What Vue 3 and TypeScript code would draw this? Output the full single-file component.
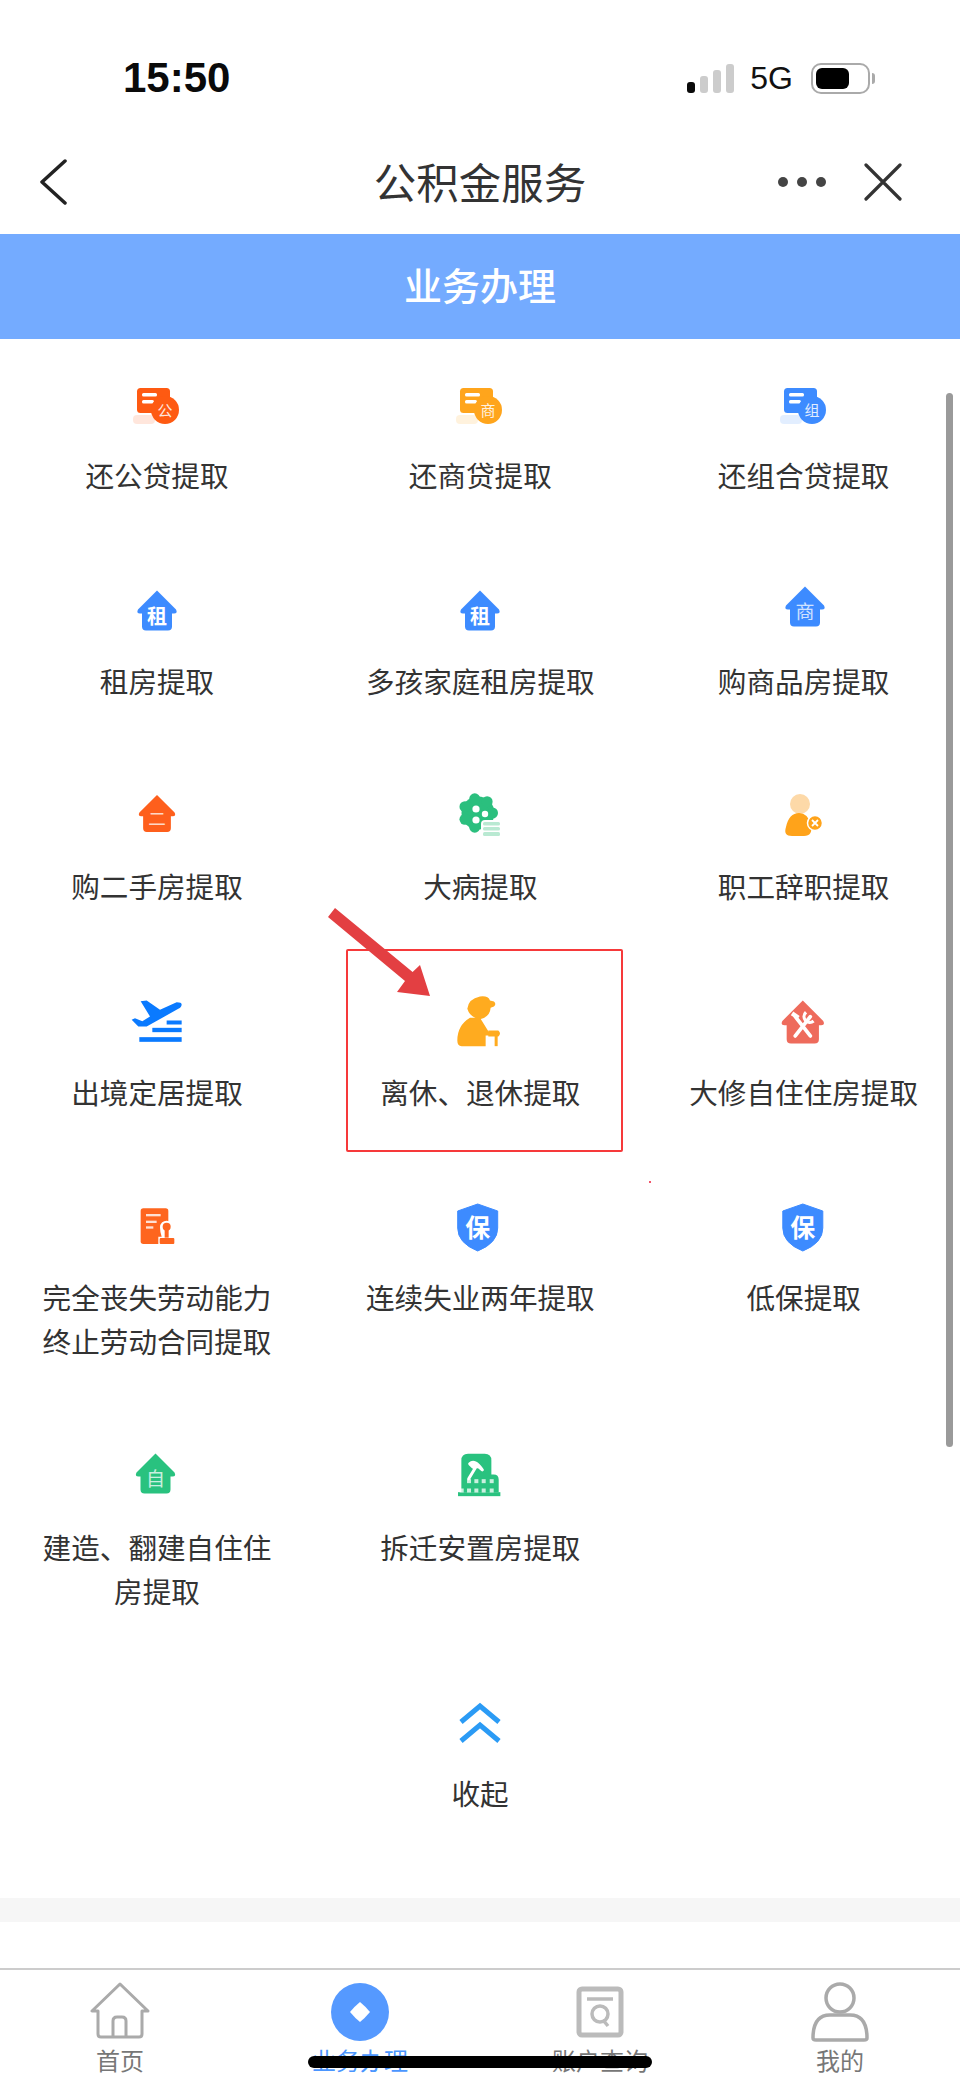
<script setup lang="ts">
interface Item {
  label: string
  icon: string
  color: string
  glyph?: string
  box?: string
}

const HOUSE = 'M30 10 L49 29 Q51 33 47 33 H45 V46 Q45 50 41 50 H19 Q15 50 15 46 V33 H13 Q9 33 11 29 Z'

const items: Item[] = [
  { label: '还公贷提取', icon: 'loan', color: '#fe5a12', glyph: '公' },
  { label: '还商贷提取', icon: 'loan', color: '#ffa51c', glyph: '商' },
  { label: '还组合贷提取', icon: 'loan', color: '#3d8bff', glyph: '组' },
  { label: '租房提取', icon: 'house', color: '#3d8bff', glyph: '租', box: 'translate(0 -1.5)' },
  { label: '多孩家庭租房提取', icon: 'house', color: '#3d8bff', glyph: '租', box: 'translate(0 -1.5)' },
  { label: '购商品房提取', icon: 'house-thin', color: '#3d8bff', glyph: '商', box: 'translate(1 -5.5)' },
  { label: '购二手房提取', icon: 'house-thin', color: '#fe5f1c', glyph: '二', box: 'translate(30 26.5) scale(.925) translate(-30 -30)' },
  { label: '大病提取', icon: 'gear', color: '#2bbf7e' },
  { label: '职工辞职提取', icon: 'person', color: '#ffa31a' },
  { label: '出境定居提取', icon: 'plane', color: '#0a7aff' },
  { label: '离休、退休提取', icon: 'elder', color: '#ffab1f' },
  { label: '大修自住住房提取', icon: 'tools', color: '#ee6b5c' },
  { label: '完全丧失劳动能力终止劳动合同提取', icon: 'doc', color: '#fe651e' },
  { label: '连续失业两年提取', icon: 'shield', color: '#3d8bff', box: 'translate(-2.3 0)' },
  { label: '低保提取', icon: 'shield', color: '#3d8bff', box: 'translate(-1.2 0)' },
  { label: '建造、翻建自住住房提取', icon: 'house-thin', color: '#29c27f', glyph: '自', box: 'translate(-1.5 -4.5)' },
  { label: '拆迁安置房提取', icon: 'building', color: '#29c27f' },
]

const tabs = ['首页', '业务办理', '账户查询', '我的']
const bumps = [0, 51, 103, 154, 206, 257, 309].map((deg) => ({
  x: 28 + 14.5 * Math.cos((deg * Math.PI) / 180),
  y: 30 + 14.5 * Math.sin((deg * Math.PI) / 180),
}))
const windows = [
  [148, 115], [170, 115], [192, 115], [216, 115],
  [126, 143], [148, 143], [170, 143], [192, 143], [216, 143],
]
</script>

<template>
  <div class="page">
    <div class="status">
      <span class="time">15:50</span>
      <div class="status-right">
        <div class="signal">
          <i class="bar on b1"></i>
          <i class="bar b2"></i>
          <i class="bar b3"></i>
          <i class="bar b4"></i>
        </div>
        <span class="net">5G</span>
        <div class="battery"><i class="level"></i></div>
        <i class="nub"></i>
      </div>
    </div>

    <header class="nav">
      <svg class="back" width="28" height="46" viewBox="0 0 28 46">
        <path d="M26 2 L3 23 L26 44" fill="none" stroke="#222" stroke-width="3.5" stroke-linecap="round" stroke-linejoin="round" />
      </svg>
      <h1 class="title">公积金服务</h1>
      <div class="nav-right">
        <div class="dots"><i></i><i></i><i></i></div>
        <svg width="38" height="38" viewBox="0 0 38 38">
          <path d="M2 2 L36 36 M36 2 L2 36" fill="none" stroke="#333" stroke-width="3.2" stroke-linecap="round" />
        </svg>
      </div>
    </header>

    <div class="band">业务办理</div>

    <section class="grid">
      <div v-for="item in items" :key="item.label" class="item">
        <svg class="icon" width="60" height="60" viewBox="0 0 60 60">
          <g v-if="item.icon === 'loan'" :fill="item.color">
            <rect x="6" y="39" width="22" height="9" rx="4" opacity=".15" />
            <rect x="10" y="12" width="33" height="25" rx="3.5" />
            <rect x="15" y="17" width="15" height="3.5" rx="1.5" fill="#fff" />
            <rect x="15" y="24" width="12" height="3.5" rx="1.5" fill="#fff" />
            <circle cx="38" cy="34" r="14" />
            <text x="38" y="39.5" class="glyph" font-size="15" fill="#fff" opacity=".85">{{ item.glyph }}</text>
          </g>

          <g v-else-if="item.icon === 'house'" :transform="item.box" :fill="item.color">
            <path :d="HOUSE" />
            <text x="30" y="43" class="glyph strong" font-size="20" fill="#fff">{{ item.glyph }}</text>
          </g>

          <g v-else-if="item.icon === 'house-thin'" :transform="item.box" :fill="item.color">
            <path :d="HOUSE" />
            <text x="30" y="42.5" class="glyph" font-size="19" fill="#fff" opacity=".75">{{ item.glyph }}</text>
          </g>

          <g v-else-if="item.icon === 'gear'" transform="translate(0 -4)" :fill="item.color">
            <circle cx="28" cy="30" r="16.5" />
            <circle v-for="(b, i) in bumps" :key="i" :cx="b.x" :cy="b.y" r="5.5" />
            <circle cx="26" cy="26" r="3.6" fill="#fff" />
            <circle cx="26" cy="37" r="3.6" fill="#fff" />
            <circle cx="35" cy="31" r="3.2" fill="#fff" />
            <rect x="31" y="37" width="20" height="18" rx="4" fill="#fff" />
            <g fill="#b9e9d2">
              <rect x="33" y="39" width="17" height="3.5" rx="1.5" />
              <rect x="33" y="44" width="17" height="3.5" rx="1.5" />
              <rect x="33" y="49" width="17" height="4" rx="1.5" />
            </g>
          </g>

          <g v-else-if="item.icon === 'person'" transform="translate(0 -4)">
            <circle cx="26" cy="21" r="10" fill="#fdd9a8" />
            <path d="M25 30 Q34 30 37 42 Q39 53 30 53 H18 Q9 53 12 44 Q15 30 25 30 Z" :fill="item.color" />
            <circle cx="41" cy="40" r="7.5" :fill="item.color" stroke="#fff" stroke-width="1.5" />
            <path d="M38 37 L44 43 M44 37 L38 43" stroke="#fff" stroke-width="1.8" />
          </g>

          <g v-else-if="item.icon === 'plane'" transform="translate(-17 -12.5) scale(.3333)" :fill="item.color">
            <path d="M92 62 L110 60 L150 88 L200 65 Q215 65 215 72 Q215 80 205 85 L110 138 H85 L65 118 L75 113 L97 122 L120 108 Z" />
            <rect x="170" y="120" width="45" height="12" />
            <rect x="127" y="142" width="88" height="13" />
            <rect x="88" y="170" width="127" height="14" />
          </g>

          <g v-else-if="item.icon === 'elder'" transform="translate(-130 -92.5) scale(.3333)" :fill="item.color">
            <path d="M442 325 Q445 295 480 288 Q505 285 510 300 L522 303 Q530 310 522 318 L512 322 Q510 350 480 356 Q450 352 442 325 Z" />
            <path d="M450 352 Q412 375 412 420 Q412 437 425 437 H497 V405 H518 V402 L505 392 L480 352 Z" />
            <path d="M505 390 H535 Q545 398 535 408 H505 Z" />
            <rect x="524" y="405" width="9" height="32" />
          </g>

          <g v-else-if="item.icon === 'tools'" transform="translate(28.8 29) scale(1.075) translate(-30 -30)">
            <path :d="HOUSE" :fill="item.color" />
            <path d="M23 43 L37 25 M23 25 L37 43" stroke="#fff" stroke-width="3.4" stroke-linecap="round" fill="none" />
            <path d="M33 21 A5 5 0 0 0 40 29" stroke="#fff" stroke-width="3" fill="none" />
            <path d="M20 22 L26 26" stroke="#fff" stroke-width="4" fill="none" />
          </g>

          <g v-else-if="item.icon === 'doc'" transform="translate(-17 -8) scale(.3333)">
            <rect x="92" y="55" width="83" height="107" rx="8" :fill="item.color" />
            <g fill="#fff" opacity=".8">
              <rect x="108" y="72" width="44" height="7" />
              <rect x="108" y="92" width="32" height="7" />
              <rect x="108" y="109" width="22" height="7" />
            </g>
            <path d="M145 165 V140 H155 Q150 125 150 112 A20 20 0 0 1 190 112 Q190 125 185 140 H198 V165 Z" fill="#fff" />
            <circle cx="170" cy="110" r="12" :fill="item.color" />
            <rect x="164" y="115" width="12" height="28" :fill="item.color" />
            <rect x="149" y="144" width="44" height="18" rx="3" :fill="item.color" />
          </g>

          <g v-else-if="item.icon === 'shield'" :transform="item.box">
            <path d="M30 6 L50 13 V30 Q50 45 30 53 Q10 45 10 30 V13 Z" :fill="item.color" stroke="#3d8bff" stroke-linejoin="round" stroke-width="1" />
            <text x="30" y="39" class="glyph strong" font-size="25" fill="#fff">保</text>
          </g>

          <g v-else-if="item.icon === 'building'" transform="translate(-30.3 -7.5) scale(.3333)" :fill="item.color">
            <path d="M125 60 Q125 40 145 40 H195 Q215 40 215 60 V102 H222 Q237 102 237 118 V155 H125 Z" />
            <rect x="115" y="155" width="127" height="12" />
            <path d="M147 115 L168 80 M150 70 Q165 55 188 88 Q172 72 160 80 Z" stroke="#fff" stroke-width="9" fill="#fff" stroke-linecap="round" stroke-linejoin="round" />
            <rect v-for="(w, i) in windows" :key="i" :x="w[0] - 6" :y="w[1] + 1" width="12" height="12" fill="#fff" opacity=".75" />
          </g>
        </svg>
        <p class="label">{{ item.label }}</p>
      </div>
    </section>

    <div class="collapse">
      <svg class="icon" width="60" height="60" viewBox="0 0 60 60">
        <path d="M11 28 L30 12 L49 28 M11 47 L30 31 L49 47" fill="none" stroke="#2b9bf5" stroke-width="5" />
      </svg>
      <p class="label">收起</p>
    </div>

    <div class="strip"></div>

    <nav class="tabs">
      <div v-for="(tab, i) in tabs" :key="tab" class="tab" :class="{ active: i === 1 }">
        <svg width="60" height="60" viewBox="0 0 60 60">
          <g v-if="i === 0" fill="none" stroke="#aaa" stroke-width="3" stroke-linejoin="round">
            <path d="M30 2 L2 29 L8 29 V52 Q8 55 11 55 H49 Q52 55 52 52 V29 L58 29 Z" />
            <path d="M23 55 V39 Q23 35 27 35 H32 Q36 35 36 39 V55" />
          </g>
          <g v-else-if="i === 1">
            <circle cx="30" cy="30" r="29" fill="#5599ff" />
            <path d="M30 20 Q35 24 40 30 Q35 36 30 40 Q25 36 20 30 Q25 24 30 20 Z" fill="#fff" />
          </g>
          <g v-else-if="i === 2" fill="none" stroke="#bbb">
            <rect x="9" y="7" width="42" height="46" rx="3" stroke-width="5" />
            <path d="M17 17 H43" stroke-width="3.5" />
            <circle cx="30" cy="32" r="8" stroke-width="3.5" />
            <path d="M33 38 L38 44" stroke-width="3.5" />
          </g>
          <g v-else fill="none" stroke="#aaa" stroke-width="3.5">
            <ellipse cx="30" cy="16" rx="14" ry="14" />
            <path d="M3 56 Q3 33 20 33 H40 Q57 33 57 56 Q57 58 54 58 H6 Q3 58 3 56 Z" />
          </g>
        </svg>
        <span class="tab-label">{{ tab }}</span>
      </div>
    </nav>

    <!-- annotations and overlays on top of the screenshot -->
    <div class="scrollbar"></div>
    <div class="mark"></div>
    <i class="speck"></i>
    <svg class="arrow" width="110" height="95" viewBox="320 905 110 95">
      <path d="M335 908 L412.6 972 L420 965 L430 996 L397 992 L405 981 L328 917 Z" fill="#e33f42" />
    </svg>
    <div class="home-bar"></div>
  </div>
</template>

<style scoped>
.page {
  position: relative;
  display: flex;
  flex-direction: column;
  width: 960px;
  height: 2087px;
  overflow: hidden;
  background: #fff;
  font-family: "Noto Sans CJK SC", "Liberation Sans", sans-serif;
  color: #333;
}

.status {
  display: flex;
  align-items: center;
  justify-content: space-between;
  box-sizing: border-box;
  height: 130px;
  padding: 26px 85px 0 123px;
}

.time {
  font-family: "Liberation Sans", sans-serif;
  font-size: 42px;
  font-weight: 700;
  color: #0a0a0a;
}

.status-right {
  display: flex;
  align-items: center;
}

.signal {
  display: flex;
  align-items: flex-end;
  gap: 5px;
  height: 29px;
}

.bar {
  display: block;
  width: 8px;
  border-radius: 3px;
  background: #ccc;
}

.bar.on {
  background: #0a0a0a;
}

.b1 { height: 11px; }
.b2 { height: 17px; }
.b3 { height: 23px; }
.b4 { height: 29px; }

.net {
  margin-left: 16px;
  font-family: "Liberation Sans", sans-serif;
  font-size: 32px;
  color: #111;
}

.battery {
  display: flex;
  align-items: center;
  box-sizing: border-box;
  width: 59px;
  height: 31px;
  margin-left: 18px;
  padding: 0 3px;
  border: 2px solid #aaa;
  border-radius: 10px;
}

.level {
  display: block;
  width: 33px;
  height: 21px;
  border-radius: 6px;
  background: #000;
}

.nub {
  display: block;
  width: 3px;
  height: 11px;
  margin-left: 2px;
  border-radius: 0 3px 3px 0;
  background: #aaa;
}

.nav {
  display: grid;
  grid-template-columns: 1fr auto 1fr;
  align-items: center;
  box-sizing: border-box;
  height: 104px;
  padding: 0 58px;
}

.back {
  display: block;
  margin-left: -19px;
}

.title {
  margin: -3px 0 0;
  font-size: 42.5px;
  font-weight: 400;
  line-height: 56px;
  color: #333;
}

.nav-right {
  display: flex;
  align-items: center;
  justify-content: flex-end;
  gap: 38px;
}

.dots {
  display: flex;
  gap: 9px;
}

.dots i {
  display: block;
  width: 10px;
  height: 10px;
  border-radius: 50%;
  background: #444;
}

.band {
  height: 105px;
  background: #74abff;
  color: #fff;
  font-size: 38px;
  font-weight: 500;
  line-height: 100px;
  text-align: center;
}

.grid {
  display: grid;
  grid-template-columns: repeat(3, 314px);
  column-gap: 9.33px;
  row-gap: 84.5px;
  align-items: start;
  padding-top: 37px;
}

.item,
.collapse {
  display: flex;
  flex-direction: column;
  align-items: center;
}

.icon {
  display: block;
  overflow: visible;
}

.label {
  width: 240px;
  margin: 17px 0 0;
  font-size: 28.6px;
  line-height: 44px;
  text-align: center;
  color: #333;
}

.glyph {
  font-family: "Noto Sans CJK SC", sans-serif;
  text-anchor: middle;
}

.glyph.strong {
  font-weight: 700;
}

.collapse {
  margin-top: 81.5px;
}

.strip {
  height: 24px;
  margin-top: 83px;
  background: #f6f6f6;
}

.tabs {
  display: grid;
  grid-template-columns: repeat(4, 240px);
  box-sizing: border-box;
  height: 119px;
  margin-top: 46px;
  padding-top: 12px;
  border-top: 2px solid #ccc;
}

.tab {
  display: flex;
  flex-direction: column;
  align-items: center;
}

.tab svg {
  display: block;
}

.tab-label {
  margin-top: 3px;
  font-size: 24px;
  line-height: 30px;
  color: #777;
}

.tab.active .tab-label {
  color: #4b96ff;
}

.scrollbar {
  position: absolute;
  left: 946px;
  top: 393px;
  width: 7px;
  height: 1054px;
  border-radius: 4px;
  background: #9a9a9a;
}

.mark {
  position: absolute;
  left: 346px;
  top: 949px;
  width: 277px;
  height: 203px;
  box-sizing: border-box;
  border: 2.5px solid #f6393a;
  border-radius: 2px;
}

.speck {
  position: absolute;
  left: 649px;
  top: 1181px;
  width: 2px;
  height: 2px;
  background: #f2546a;
}

.arrow {
  position: absolute;
  left: 320px;
  top: 905px;
}

.home-bar {
  position: absolute;
  left: 308px;
  top: 2056px;
  width: 344px;
  height: 12px;
  border-radius: 6px;
  background: #000;
}
</style>
